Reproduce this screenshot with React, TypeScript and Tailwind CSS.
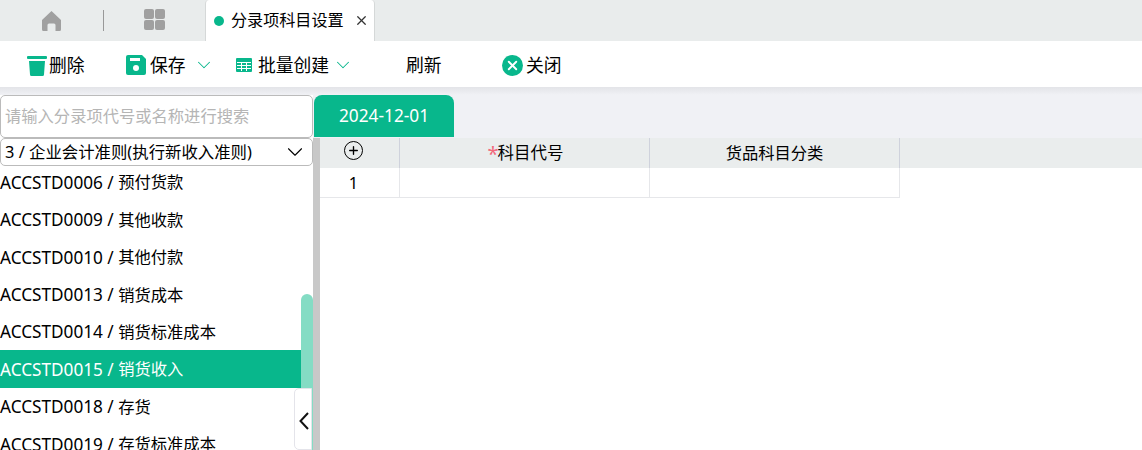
import { ChevronDown, Plus, X } from 'lucide-react';

const accounts = [
  ['ACCSTD0006', '预付货款'],
  ['ACCSTD0009', '其他收款'],
  ['ACCSTD0010', '其他付款'],
  ['ACCSTD0013', '销货成本'],
  ['ACCSTD0014', '销货标准成本'],
  ['ACCSTD0015', '销货收入'],
  ['ACCSTD0018', '存货'],
  ['ACCSTD0019', '存货标准成本'],
];

const green = 'text-[#08b78c]';

const TrashIcon = () => (
  <svg width="20" height="21" viewBox="0 0 20 21" className={green} fill="currentColor">
    <rect x="0" y="1" width="20" height="3" rx="1" />
    <path d="M2 6h16l-1 13.500a1.500 1.500 0 0 1-1.500 1.500h-11A1.500 1.500 0 0 1 3 19.500z" />
  </svg>
);

const SaveIcon = () => (
  <svg width="20" height="20" viewBox="0 0 20 20" className={green}>
    <path fill="currentColor" d="M2 0h14l4 4v14a2 2 0 0 1-2 2H2a2 2 0 0 1-2-2V2a2 2 0 0 1 2-2z" />
    <rect x="4" y="3" width="10" height="3" fill="#fff" />
    <circle cx="10" cy="13" r="3" fill="#fff" />
  </svg>
);

const TableIcon = () => (
  <svg width="16" height="14" viewBox="0 0 16 14" className={green}>
    <rect width="16" height="14" rx="1" fill="currentColor" />
    <path stroke="#fff" strokeWidth="1" d="M1 4.500h14M1 7.500h14M1 10.500h14M5.500 4v9M10.500 4v9" />
  </svg>
);

const CloseIcon = () => (
  <span className="flex h-[21px] w-[21px] items-center justify-center rounded-full bg-[#08b78c]">
    <X size={15} strokeWidth={3} className="text-white" />
  </span>
);

const HomeIcon = () => (
  <svg width="21" height="20" viewBox="0 0 20 20" fill="#a0a0a0">
    <path d="M10 0 0.500 9v9.500A1.500 1.500 0 0 0 2 20h4v-6a1.500 1.500 0 0 1 1.500-1.500h5A1.500 1.500 0 0 1 14 14v6h4a1.500 1.500 0 0 0 1.500-1.500V9z" />
  </svg>
);

const GridIcon = () => (
  <div className="grid h-[21px] w-[21px] grid-cols-2 gap-[1px]">
    <span className="rounded-[2px] bg-[#a0a0a0]" />
    <span className="rounded-[2px] bg-[#a0a0a0]" />
    <span className="rounded-[2px] bg-[#a0a0a0]" />
    <span className="rounded-[2px] bg-[#a0a0a0]" />
  </div>
);

export default function App() {
  return (
    <div
      className="flex h-[450px] w-[1142px] flex-col overflow-hidden bg-white text-[16.300px] text-black"
      style={{ fontFamily: '"Noto Sans", "Noto Sans CJK SC", sans-serif' }}
    >
      <div className="flex h-[41px] shrink-0 bg-[#e9ecec]">
        <div className="flex w-[103px] items-center justify-end pr-[41px]">
          <HomeIcon />
        </div>
        <div className="my-[10px] w-px bg-[#999]" />
        <div className="flex w-[101px] items-center pl-[40px] pb-[3px]">
          <GridIcon />
        </div>
        <div className="flex w-[170px] items-center rounded-t-[4px] border-x border-[#d5d8d8] bg-white pl-[8px] text-[16.100px]">
          <span className="h-[10px] w-[10px] rounded-full bg-[#08b78c]" />
          <span className="ml-[7px] leading-none">分录项科目设置</span>
          <X size={15} className="ml-[10px] text-[#333]" />
        </div>
      </div>

      <div className="flex h-[46px] shrink-0 items-center bg-white pl-[27px] pt-[2px] text-[17.800px]">
        <div className="flex w-[99px] items-center gap-[2px]">
          <TrashIcon />
          <span>删除</span>
        </div>
        <div className="flex w-[110px] items-center gap-[4px]">
          <SaveIcon />
          <span>保存</span>
          <ChevronDown size={22} strokeWidth={1.1} className={`ml-[3px] ${green}`} />
        </div>
        <div className="flex w-[170px] items-center gap-[5px]">
          <TableIcon />
          <span className="ml-[1px]">批量创建</span>
          <ChevronDown size={22} strokeWidth={1.1} className={`-ml-[2px] ${green}`} />
        </div>
        <div className="w-[96px]">刷新</div>
        <div className="flex items-center gap-[3px]">
          <CloseIcon />
          <span>关闭</span>
        </div>
      </div>

      <div className="h-[8px] shrink-0 bg-gradient-to-b from-[#e3e4e8] to-[#f0f1f5]" />

      <div className="flex min-h-0 flex-1 bg-white">
        <div className="relative flex w-[313px] shrink-0 flex-col">
          <div className="flex h-[43px] shrink-0 items-center rounded-[5px] border border-[#bbb] bg-white pl-[4px] text-[#b5b5b5]">
            请输入分录项代号或名称进行搜索
          </div>
          <div className="flex h-[28px] shrink-0 items-center justify-between rounded-[5px] border border-[#bbb] bg-white pl-[4px] pr-[4px] text-[16.400px] leading-none">
            <span>3 / 企业会计准则(执行新收入准则)</span>
            <ChevronDown size={26} strokeWidth={1} />
          </div>
          <div className="-mt-[2.500px] min-h-0 flex-1 overflow-hidden">
            {accounts.map(([code, name], i) => (
              <div
                key={code}
                className={`flex h-[37.400px] items-center whitespace-pre pt-px ${i === 5 ? 'bg-[#08b78c] text-white' : ''}`}
              >
                <span className="text-[17.200px]">{code} / </span>
                <span>{name}</span>
              </div>
            ))}
          </div>
          <div className="absolute right-0 top-[199px] bottom-0 w-[12px] rounded-t-[6px] bg-[#84dcc4]" />
          <div className="absolute right-[1px] top-[293px] bottom-0 flex w-[18px] items-center justify-center rounded-l-[5px] border border-[#e4e4ea] bg-white pl-[1px] pt-[4px]">
            <svg width="10" height="18" viewBox="0 0 10 18" fill="none" stroke="#111" strokeWidth="2">
              <path d="M9 1 1.500 9 9 17" />
            </svg>
          </div>
        </div>

        <div className="flex min-w-0 flex-1 flex-col">
          <div className="flex h-[43px] shrink-0 bg-[#f0f1f5] pl-px">
            <div className="flex h-[42px] w-[140px] items-center justify-center rounded-t-[8px] bg-[#08b78c] text-[17.300px] text-white">
              2024-12-01
            </div>
          </div>
          <div className="flex min-h-0 flex-1">
            <div className="w-[7px] shrink-0 bg-[#c8c8c8]" />
            <div className="min-w-0 flex-1">
              <div className="flex h-[30px] bg-[#eaeded]">
                <div className="flex w-[80px] items-center justify-center border-r border-[#cfd2dc] pb-[6px] pr-[12px]">
                  <span className="flex h-[19px] w-[19px] items-center justify-center rounded-full border-[1.500px] border-black">
                    <Plus size={13} strokeWidth={2.5} />
                  </span>
                </div>
                <div className="flex w-[250px] items-center justify-center border-r border-[#cfd2dc] pl-[2px] pt-px">
                  <span className="text-[20px] leading-none text-[#f36a7c]">*</span>
                  <span className="-ml-px text-[16.500px]">科目代号</span>
                </div>
                <div className="flex w-[250px] items-center justify-center border-r border-[#cfd2dc] pt-px">货品科目分类</div>
              </div>
              <div className="flex h-[30px] w-[580px] border-b border-[#e6e7ea]">
                <div className="flex w-[80px] items-center justify-center border-r border-[#e6e7ea] pr-[12px] pt-px">1</div>
                <div className="w-[250px] border-r border-[#e6e7ea]" />
                <div className="w-[250px] border-r border-[#e6e7ea]" />
              </div>
            </div>
          </div>
        </div>
      </div>
    </div>
  );
}
